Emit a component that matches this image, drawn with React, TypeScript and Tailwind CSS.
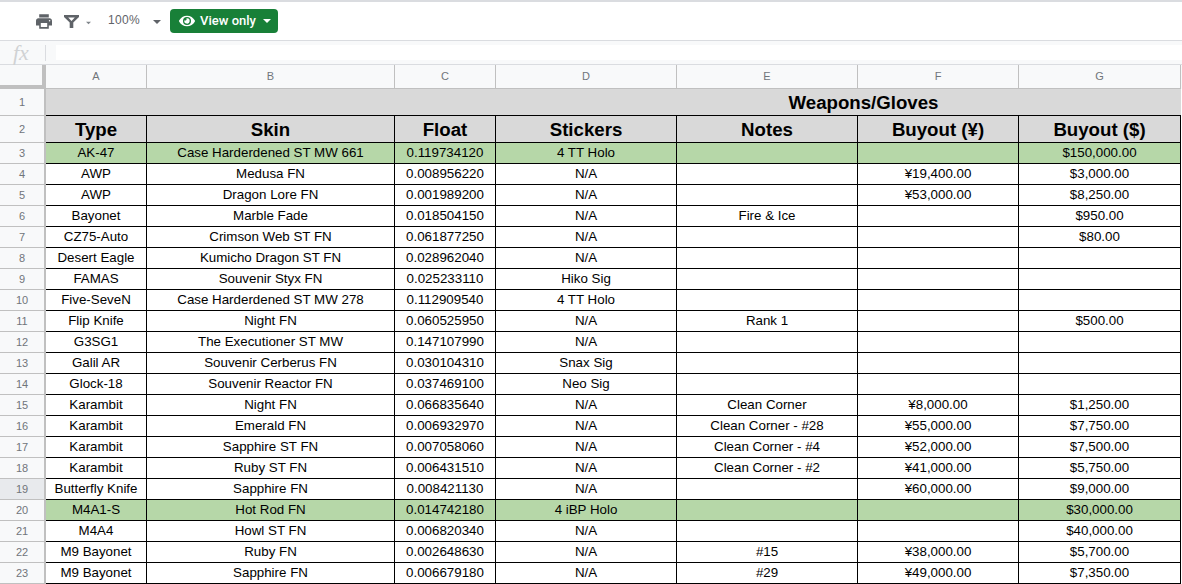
import React from "react";
import { FaEye } from "react-icons/fa";

const gridCols = "grid grid-cols-[46px_101px_248px_101px_181px_181px_161px_162px_2px]";

type Row = { cells: string[]; green?: boolean; num: number };

const rows: Row[] = [
  { num: 3, green: true, cells: ["AK-47", "Case Harderdened ST MW 661", "0.119734120", "4 TT Holo", "", "", "$150,000.00"] },
  { num: 4, cells: ["AWP", "Medusa FN", "0.008956220", "N/A", "", "¥19,400.00", "$3,000.00"] },
  { num: 5, cells: ["AWP", "Dragon Lore FN", "0.001989200", "N/A", "", "¥53,000.00", "$8,250.00"] },
  { num: 6, cells: ["Bayonet", "Marble Fade", "0.018504150", "N/A", "Fire & Ice", "", "$950.00"] },
  { num: 7, cells: ["CZ75-Auto", "Crimson Web ST FN", "0.061877250", "N/A", "", "", "$80.00"] },
  { num: 8, cells: ["Desert Eagle", "Kumicho Dragon ST FN", "0.028962040", "N/A", "", "", ""] },
  { num: 9, cells: ["FAMAS", "Souvenir Styx FN", "0.025233110", "Hiko Sig", "", "", ""] },
  { num: 10, cells: ["Five-SeveN", "Case Harderdened ST MW 278", "0.112909540", "4 TT Holo", "", "", ""] },
  { num: 11, cells: ["Flip Knife", "Night FN", "0.060525950", "N/A", "Rank 1", "", "$500.00"] },
  { num: 12, cells: ["G3SG1", "The Executioner ST MW", "0.147107990", "N/A", "", "", ""] },
  { num: 13, cells: ["Galil AR", "Souvenir Cerberus FN", "0.030104310", "Snax Sig", "", "", ""] },
  { num: 14, cells: ["Glock-18", "Souvenir Reactor FN", "0.037469100", "Neo Sig", "", "", ""] },
  { num: 15, cells: ["Karambit", "Night FN", "0.066835640", "N/A", "Clean Corner", "¥8,000.00", "$1,250.00"] },
  { num: 16, cells: ["Karambit", "Emerald FN", "0.006932970", "N/A", "Clean Corner - #28", "¥55,000.00", "$7,750.00"] },
  { num: 17, cells: ["Karambit", "Sapphire ST FN", "0.007058060", "N/A", "Clean Corner - #4", "¥52,000.00", "$7,500.00"] },
  { num: 18, cells: ["Karambit", "Ruby ST FN", "0.006431510", "N/A", "Clean Corner - #2", "¥41,000.00", "$5,750.00"] },
  { num: 19, cells: ["Butterfly Knife", "Sapphire FN", "0.008421130", "N/A", "", "¥60,000.00", "$9,000.00"] },
  { num: 20, green: true, cells: ["M4A1-S", "Hot Rod FN", "0.014742180", "4 iBP Holo", "", "", "$30,000.00"] },
  { num: 21, cells: ["M4A4", "Howl ST FN", "0.006820340", "N/A", "", "", "$40,000.00"] },
  { num: 22, cells: ["M9 Bayonet", "Ruby FN", "0.002648630", "N/A", "#15", "¥38,000.00", "$5,700.00"] },
  { num: 23, cells: ["M9 Bayonet", "Sapphire FN", "0.006679180", "N/A", "#29", "¥49,000.00", "$7,350.00"] },
];

const headers = ["Type", "Skin", "Float", "Stickers", "Notes", "Buyout (¥)", "Buyout ($)"];
const letters = ["A", "B", "C", "D", "E", "F", "G"];

const Caret = ({ className }: { className: string }) => (
  <svg width="8" height="4" viewBox="0 0 8 4" className={className}>
    <path d="M0 0h8L4 4z" fill="currentColor" />
  </svg>
);

const RowNum = ({ n, h, dark }: { n: number; h: string; dark?: boolean }) => (
  <div className={`${h} ${dark ? "bg-[#e8eaed]" : "bg-[#f8f9fa]"} flex items-center justify-center border-r-2 border-b border-[#c0c0c0] text-[11px] text-[#70757a]`}>
    {n}
  </div>
);

const Toolbar = () => (
  <div className="h-[41px] shrink-0 flex items-center border-t-2 border-b border-[#dadce0] pl-[36px] text-[#5f6368]">
    <svg width="16" height="15" viewBox="2 3 20 18" className="text-[#5f6368]">
      <path fill="currentColor" d="M19 8H5c-1.66 0-3 1.34-3 3v6h4v4h12v-4h4v-6c0-1.66-1.34-3-3-3zm-3 11H8v-5h8v5zm3-7c-.55 0-1-.45-1-1s.45-1 1-1 1 .45 1 1-.45 1-1 1zm-1-9H6v4h12V3z" />
    </svg>
    <svg width="15" height="13" viewBox="0 0 15 13" className="ml-[12px]">
      <path fill="currentColor" d="M0 0h15v2L9.3 7.6V13H5.7V7.6L0 2z M4.2 2.4h6.6L7.5 6z" fillRule="evenodd" />
    </svg>
    <Caret className="ml-[7px] mt-[3px] w-[5px] text-[#80868b]" />
    <span className="ml-[17px] text-[12px] tracking-[0.35px] text-[#5f6368] mb-[2px]">100%</span>
    <Caret className="ml-[13px] mt-[2px] text-[#5f6368]" />
    <div className="ml-[9px] mb-[1px] w-[108px] h-[24px] rounded-[4px] bg-[#188038] flex items-center pl-[9px] text-white">
      <FaEye size={16} />
      <span className="ml-[5px] text-[13px] font-medium font-['Roboto',sans-serif]">View only</span>
      <Caret className="ml-[7px] text-white" />
    </div>
  </div>
);

const FormulaBar = () => (
  <div className="h-[24px] shrink-0 flex items-center border-b border-[#dadce0] bg-[#f8f9fa]">
    <span className="ml-[13px] w-[32px] text-[22px] leading-none italic text-[#d0d2d4] font-['Liberation_Serif',serif]">fx</span>
    <div className="w-px h-[16px] bg-[#dadce0]" />
    <div className="ml-[10px] flex-1 h-[15px] bg-white" />
  </div>
);

export default function App() {
  return (
    <div className="w-[1182px] h-[584px] overflow-hidden flex flex-col bg-white font-['Liberation_Sans',Arial,sans-serif]">
      <Toolbar />
      <FormulaBar />
      <div className={gridCols}>
        <div className="h-[24px] bg-[#f8f9fa] border-r-[4px] border-b-[4px] border-[#c0c0c0]" />
        {letters.map((l) => (
          <div key={l} className="h-[24px] bg-[#f8f9fa] flex items-center justify-center border-r border-b border-[#c0c0c0] text-[11px] text-[#70757a]">
            {l}
          </div>
        ))}
        <div className="h-[24px] bg-[#f8f9fa]" />
      </div>
      <div className={gridCols}>
        <RowNum n={1} h="h-[27px]" />
        <div className="col-span-7 h-[27px] bg-[#d9d9d9] flex items-center justify-center border-b border-black text-[18.67px] font-bold text-black pt-[1px] pl-[500px]">
          Weapons/Gloves
        </div>
        <div />
        <RowNum n={2} h="h-[27px]" />
        {headers.map((h) => (
          <div key={h} className="h-[27px] bg-[#d9d9d9] flex items-center justify-center border-r border-b border-black text-[18.67px] font-bold text-black pt-[1px]">
            {h}
          </div>
        ))}
        <div />
        {rows.map((r) => (
          <React.Fragment key={r.num}>
            <RowNum n={r.num} h="h-[21px]" dark={r.num === 19} />
            {r.cells.map((c, i) => (
              <div
                key={i}
                className={`h-[21px] flex items-center justify-center whitespace-nowrap border-r border-b border-black text-[13.33px] text-black ${r.green ? "bg-[#b6d7a8]" : "bg-white"}`}
              >
                {c}
              </div>
            ))}
            <div />
          </React.Fragment>
        ))}
      </div>
    </div>
  );
}
